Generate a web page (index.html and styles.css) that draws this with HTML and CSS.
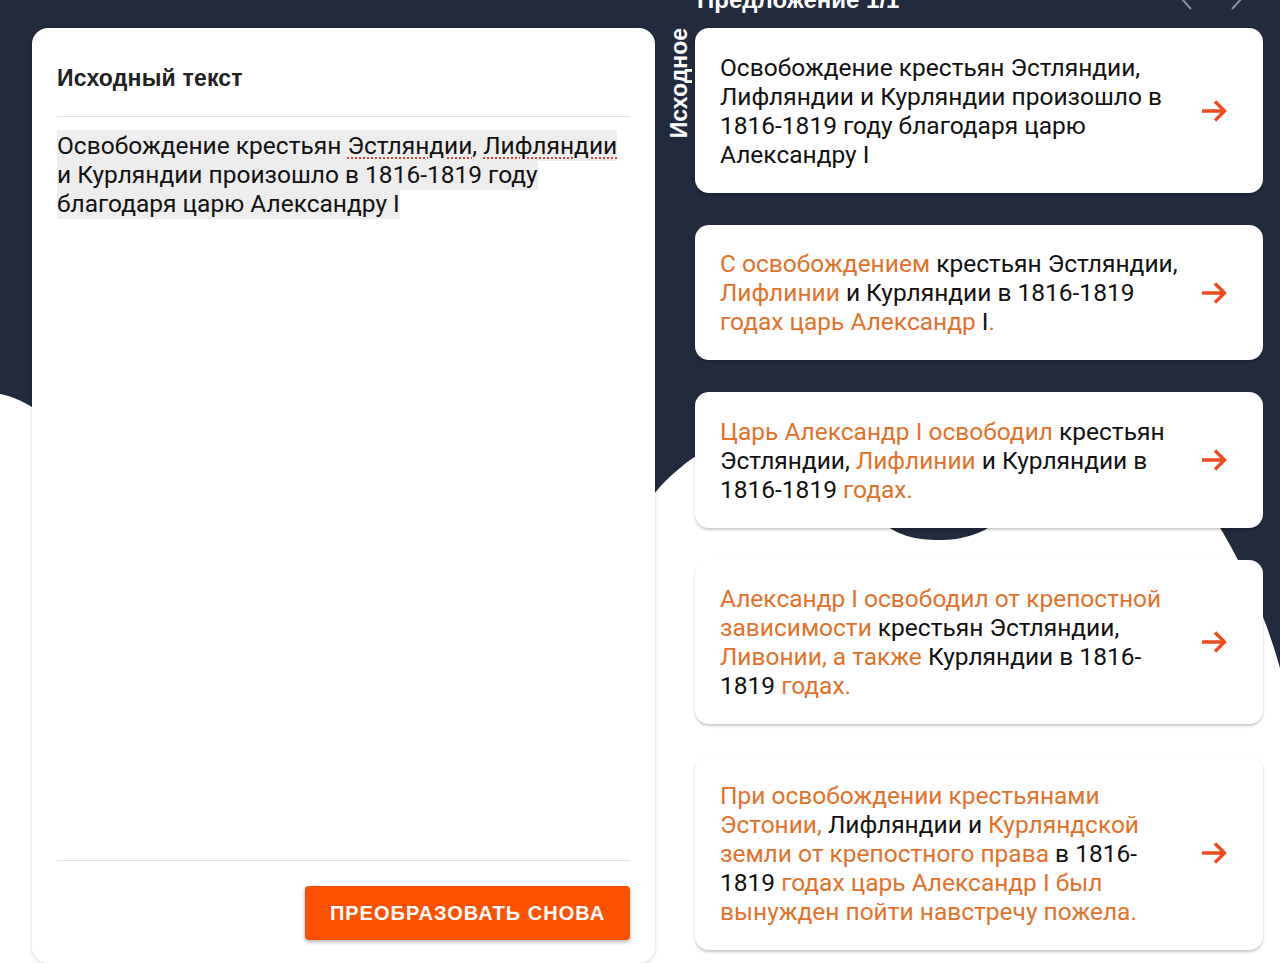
FILE: index.html
```html
<!DOCTYPE html>
<html lang="ru">
<head>
    <meta charset="UTF-8">
    <meta name="viewport" content="width=device-width, initial-scale=1.0">
    <title>Перефразирование</title>
    <link rel="stylesheet" href="styles.css">
</head>
<body>
    <!-- Background waves -->
    <svg class="backdrop" viewBox="0 0 1280 963" preserveAspectRatio="none" aria-hidden="true">
        <path fill="#222a3e" d="M0 0 H1280 V668 C1268 625 1245 565 1212 515 C1170 455 1070 455 1005 515 C985 535 960 540 940 540 C915 540 895 535 880 520 C830 455 730 420 680 468 C665 480 655 492 650 500 L40 412 C25 402 12 396 0 394 Z"/>
    </svg>

    <div class="page">
        <section class="source-card">
            <div class="card-head">
                <h3>Исходный текст</h3>
            </div>
            <div class="source-body">
                <span class="source-text">Освобождение крестьян <span class="misspelled">Эстляндии</span>, <span class="misspelled">Лифляндии</span> и Курляндии произошло в 1816-1819 году благодаря царю Александру I</span>
            </div>
            <div class="card-footer">
                <button class="convert-btn">Преобразовать снова</button>
            </div>
        </section>

        <section class="results">
            <div class="results-head">
                <h2>Предложение 1/1</h2>
                <div class="pager">
                    <svg width="14" height="24" viewBox="0 0 14 24"><path d="M12 1 L2 12 L12 23" fill="none" stroke="#8a909e" stroke-width="2"/></svg>
                    <svg width="14" height="24" viewBox="0 0 14 24"><path d="M2 1 L12 12 L2 23" fill="none" stroke="#8a909e" stroke-width="2"/></svg>
                </div>
            </div>

            <div class="results-body">
                <div class="side-label">Исходное</div>

                <div class="variants">
                    <div class="variant">
                        <p>Освобождение крестьян Эстляндии, Лифляндии и Курляндии произошло в 1816-1819 году благодаря царю Александру I</p>
                        <svg class="go" viewBox="0 0 28 24"><path d="M2 12 H25 M15 2.5 L24.5 12 L15 21.5"/></svg>
                    </div>
                    <div class="variant">
                        <p><span class="alt">С освобождением</span> крестьян Эстляндии, <span class="alt">Лифлинии</span> и Курляндии в 1816-1819 <span class="alt">годах царь Александр</span> I<span class="alt">.</span></p>
                        <svg class="go" viewBox="0 0 28 24"><path d="M2 12 H25 M15 2.5 L24.5 12 L15 21.5"/></svg>
                    </div>
                    <div class="variant">
                        <p><span class="alt">Царь Александр I освободил</span> крестьян Эстляндии, <span class="alt">Лифлинии</span> и Курляндии в 1816-1819 <span class="alt">годах.</span></p>
                        <svg class="go" viewBox="0 0 28 24"><path d="M2 12 H25 M15 2.5 L24.5 12 L15 21.5"/></svg>
                    </div>
                    <div class="variant">
                        <p><span class="alt">Александр I освободил от крепостной зависимости</span> крестьян Эстляндии, <span class="alt">Ливонии, а также</span> Курляндии в 1816-1819 <span class="alt">годах.</span></p>
                        <svg class="go" viewBox="0 0 28 24"><path d="M2 12 H25 M15 2.5 L24.5 12 L15 21.5"/></svg>
                    </div>
                    <div class="variant">
                        <p><span class="alt">При освобождении крестьянами Эстонии,</span> Лифляндии и <span class="alt">Курляндской земли от крепостного права</span> в 1816-1819 <span class="alt">годах царь Александр I был вынужден пойти навстречу пожела.</span></p>
                        <svg class="go" viewBox="0 0 28 24"><path d="M2 12 H25 M15 2.5 L24.5 12 L15 21.5"/></svg>
                    </div>
                </div>
            </div>
        </section>
    </div>
</body>
</html>
```

FILE: styles.css
```css
body {
    margin: 0;
    background: #fff;
    font-family: Roboto, "Liberation Sans", sans-serif;
    color: #111;
    overflow: hidden;
}
.backdrop {
    position: absolute;
    top: 0;
    left: 0;
    width: 1280px;
    height: 963px;
    z-index: 0;
}
.page {
    position: relative;
    z-index: 1;
    display: flex;
    height: 963px;
}

/* left card */
.source-card {
    margin: 28px 0 0 32px;
    width: 623px;
    height: 935px;
    box-sizing: border-box;
    padding: 0 25px;
    background: #fff;
    border-radius: 16px;
    box-shadow: 0 1px 4px rgba(0,0,0,0.18);
    display: flex;
    flex-direction: column;
}
.card-head {
    padding: 36px 0 24px;
    border-bottom: 1px solid #e0e0e0;
}
.card-head h3 {
    margin: 0;
    font-family: "Liberation Sans", Arial, sans-serif;
    font-size: 23px;
    line-height: 28px;
    font-weight: bold;
    letter-spacing: 0.2px;
    color: #222;
}
.source-body {
    flex: 1;
    padding-top: 14px;
    font-size: 24.5px;
    line-height: 29px;
}
.source-text {
    background: #ededed;
    padding: 1px 0;
}
.misspelled {
    text-decoration: underline dotted #e8413a;
    text-decoration-thickness: 2px;
    text-underline-offset: 3px;
}
.card-footer {
    border-top: 1px solid #e0e0e0;
    padding: 25px 0 23px;
    display: flex;
    justify-content: flex-end;
}
.convert-btn {
    width: 325px;
    height: 54px;
    border: none;
    border-radius: 4px;
    background: #fe5100;
    color: #fff;
    font-family: "Liberation Sans", Arial, sans-serif;
    font-size: 20px;
    font-weight: bold;
    letter-spacing: 1px;
    text-transform: uppercase;
    box-shadow: 0 2px 4px rgba(0,0,0,0.3);
    cursor: pointer;
}

/* right column */
.results {
    width: 608px;
}
.results-head {
    margin-top: -12px;
    height: 40px;
    margin-left: 42px;
    margin-right: 19px;
    display: flex;
    justify-content: space-between;
}
.results-head h2 {
    margin: 0;
    font-family: "Liberation Sans", Arial, sans-serif;
    font-size: 24px;
    line-height: 24px;
    font-weight: bold;
    color: #fff;
}
.pager {
    display: flex;
    gap: 37px;
    margin-top: -2px;
}
.results-body {
    display: flex;
}
.side-label {
    width: 40px;
    flex: none;
    align-self: flex-start;
    writing-mode: vertical-rl;
    transform: rotate(180deg);
    font-family: "Liberation Sans", Arial, sans-serif;
    font-size: 23px;
    font-weight: bold;
    line-height: 48px;
    color: #fff;
}
.variants {
    width: 568px;
    display: flex;
    flex-direction: column;
    gap: 32px;
}
.variant {
    background: #fff;
    border-radius: 14px;
    padding: 24.5px 35px 24px 25px;
    display: flex;
    align-items: center;
    gap: 18px;
    box-shadow: 0 2px 3px rgba(0,0,0,0.22);
}
.variant p {
    flex: 1;
    margin: 0;
    font-size: 24.5px;
    line-height: 29px;
    color: #111;
}
.alt {
    color: #e2722b;
}
.go {
    width: 28px;
    height: 24px;
    flex: none;
    fill: none;
    stroke: #f04b1c;
    stroke-width: 3.4;
}
```
